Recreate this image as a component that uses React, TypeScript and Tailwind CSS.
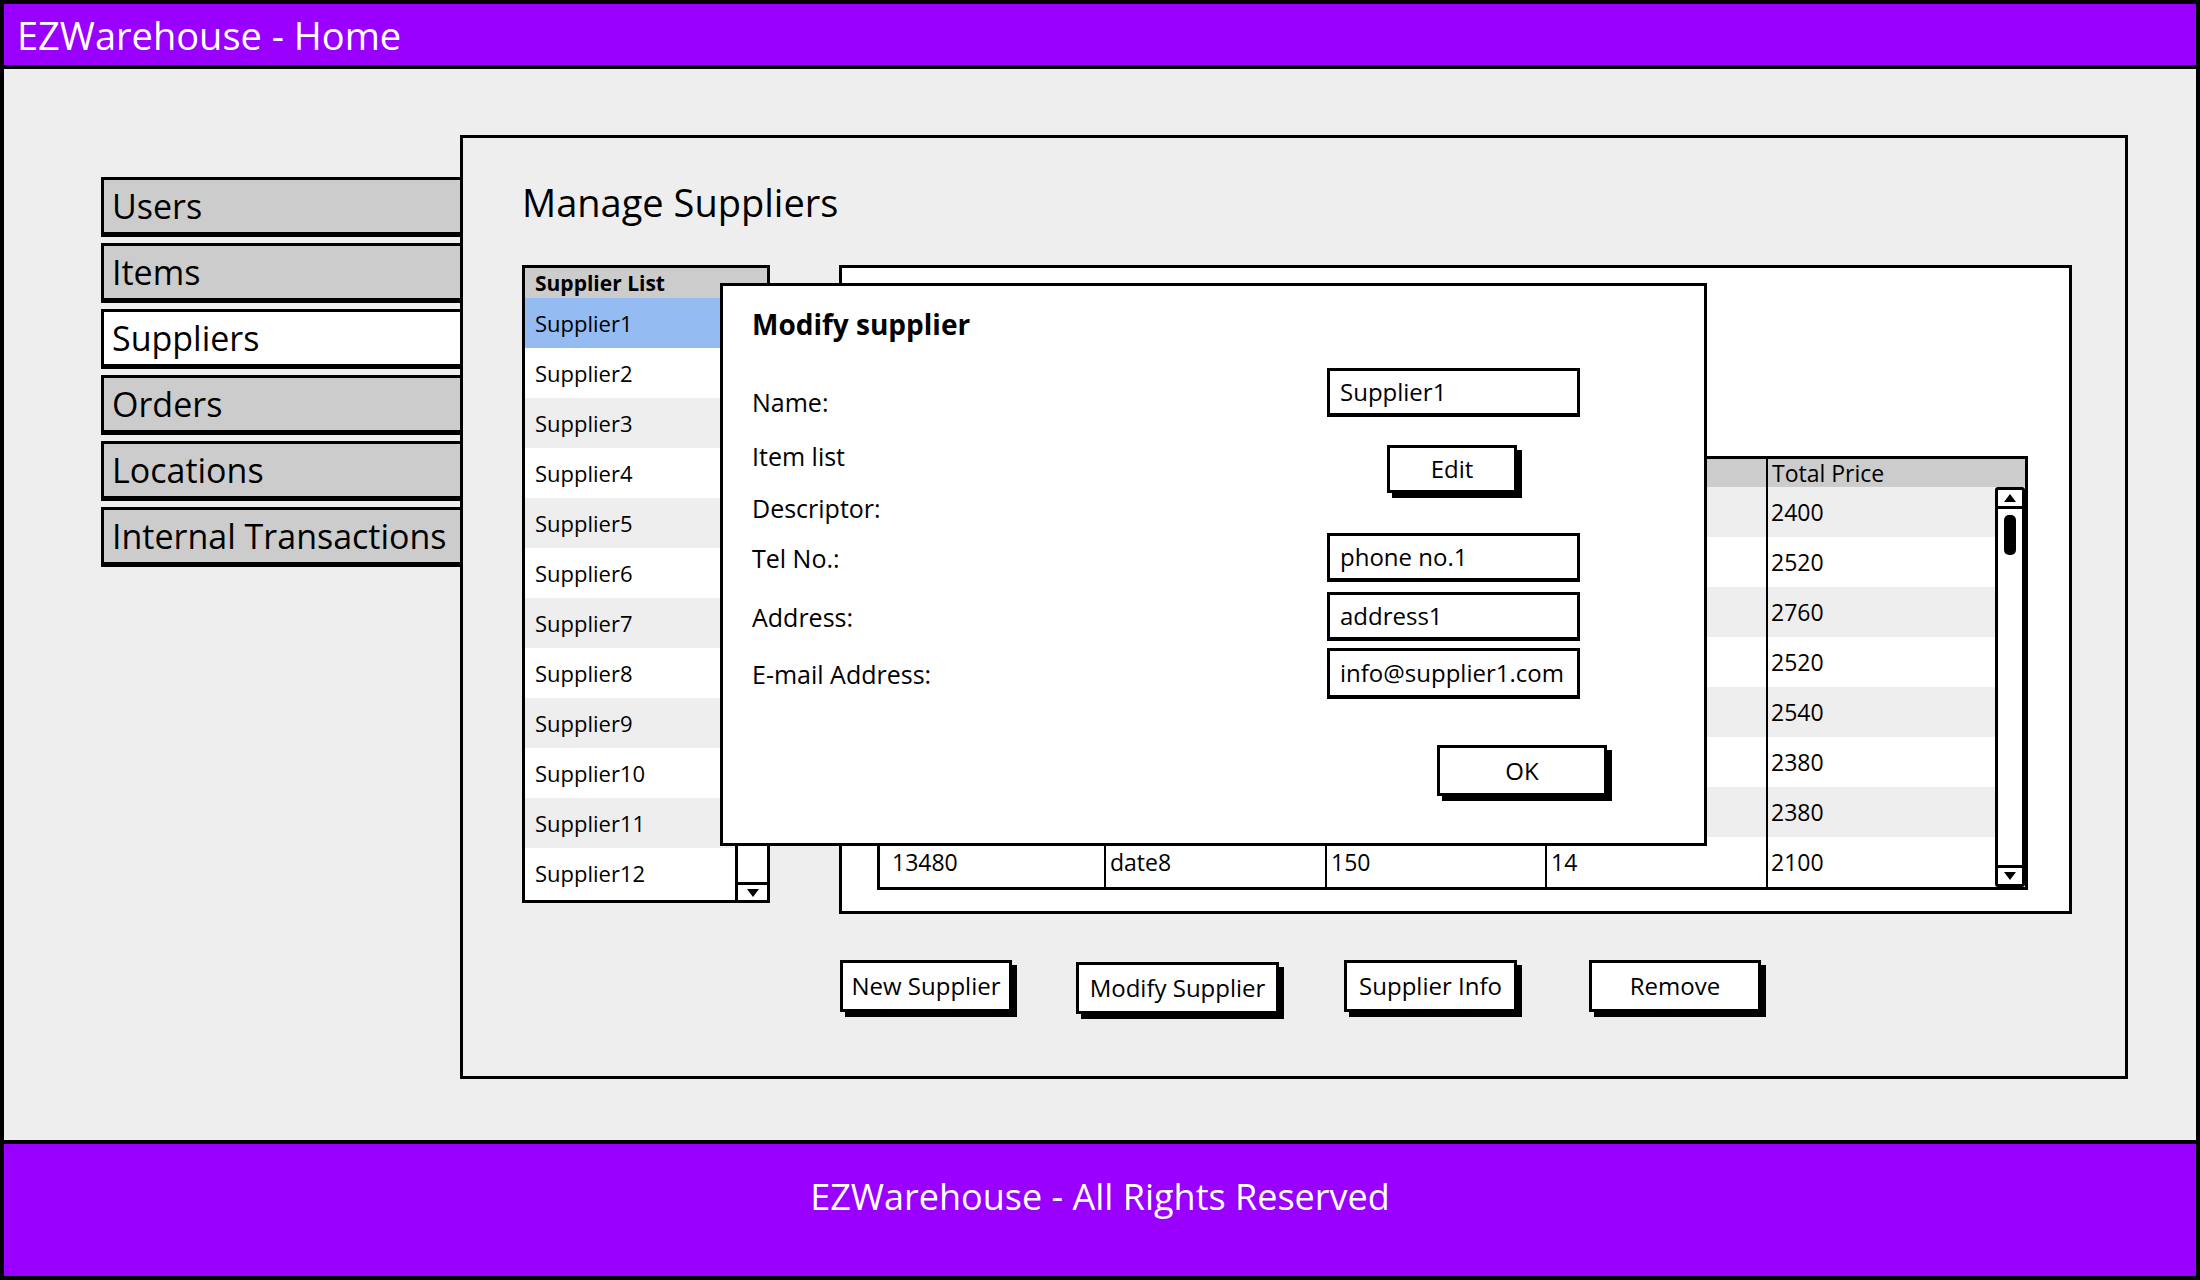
import type { ReactNode } from 'react';

const navItems = ['Users', 'Items', 'Suppliers', 'Orders', 'Locations', 'Internal Transactions'];
const suppliers = Array.from({ length: 12 }, (_, i) => `Supplier${i + 1}`);

// rows above the last one sit under the dialog, only the total column shows
const orders = [
  { id: '', date: '', qty: '', price: '', total: '2400' },
  { id: '', date: '', qty: '', price: '', total: '2520' },
  { id: '', date: '', qty: '', price: '', total: '2760' },
  { id: '', date: '', qty: '', price: '', total: '2520' },
  { id: '', date: '', qty: '', price: '', total: '2540' },
  { id: '', date: '', qty: '', price: '', total: '2380' },
  { id: '', date: '', qty: '', price: '', total: '2380' },
  { id: '13480', date: 'date8', qty: '150', price: '14', total: '2100' },
];

function UpArrow() {
  return (
    <svg width="14" height="10" viewBox="0 0 14 10">
      <polygon points="7,1 13,9 1,9" fill="#000" />
    </svg>
  );
}

function DownArrow() {
  return (
    <svg width="14" height="10" viewBox="0 0 14 10">
      <polygon points="1,1 13,1 7,9" fill="#000" />
    </svg>
  );
}

function SketchButton({ children, className = '' }: { children: ReactNode; className?: string }) {
  return (
    <div
      className={`flex items-center justify-center border-[3px] border-black bg-white text-[24px] leading-none shadow-[5px_5px_0_0_#000] ${className}`}
    >
      {children}
    </div>
  );
}

function Field({ value }: { value: string }) {
  return (
    <div className="flex h-full w-[253px] items-center border-[3px] border-b-4 border-black bg-white pl-[10px] text-[24px] leading-none">
      {value}
    </div>
  );
}

function SupplierList() {
  return (
    <div className="flex h-[638px] w-[248px] shrink-0 flex-col border-[3px] border-black bg-white">
      <div className="flex h-[30px] items-center bg-[#cccccc] pl-[10px] text-[21px] font-bold leading-none">
        Supplier List
      </div>
      <div className="flex flex-1">
        <div className="flex flex-1 flex-col">
          {suppliers.map((s, i) => (
            <div
              key={s}
              className={`flex h-[50px] items-center pl-[10px] text-[22px] leading-none ${
                i === 0 ? 'bg-[#94bbf2]' : i % 2 === 0 ? 'bg-[#eeeeee]' : 'bg-white'
              }`}
            >
              {s}
            </div>
          ))}
        </div>
        <div className="flex w-[32px] flex-col border-l-[3px] border-black bg-white">
          <div className="flex h-[18px] items-center justify-center border-b-[3px] border-black">
            <UpArrow />
          </div>
          <div className="flex-1" />
          <div className="flex h-[18px] items-center justify-center border-t-[3px] border-black">
            <DownArrow />
          </div>
        </div>
      </div>
    </div>
  );
}

function OrdersTable() {
  const cols = 'grid grid-cols-[226px_221px_220px_221px_1fr]';
  return (
    <div className="flex w-[1151px] flex-col border-[3px] border-black bg-white text-[23px] leading-none">
      <div className={`${cols} h-[28px] bg-[#cccccc]`}>
        <div className="border-r-2 border-black" />
        <div className="border-r-2 border-black" />
        <div className="border-r-2 border-black" />
        <div className="border-r-2 border-black" />
        <div className="flex items-center pl-[4px]">Total Price</div>
      </div>
      <div className="flex">
        <div className="flex-1">
          {orders.map((o, i) => (
            <div key={i} className={`${cols} h-[50px] ${i % 2 === 0 ? 'bg-[#eeeeee]' : 'bg-white'}`}>
              <div className="flex items-center border-r-2 border-black pl-[12px]">{o.id}</div>
              <div className="flex items-center border-r-2 border-black pl-[4px]">{o.date}</div>
              <div className="flex items-center border-r-2 border-black pl-[4px]">{o.qty}</div>
              <div className="flex items-center border-r-2 border-black pl-[4px]">{o.price}</div>
              <div className="flex items-center pl-[3px]">{o.total}</div>
            </div>
          ))}
        </div>
        <div className="flex w-[30px] flex-col rounded-[3px] border-[3px] border-black bg-white">
          <div className="flex h-[19px] items-center justify-center border-b-[3px] border-black">
            <UpArrow />
          </div>
          <div className="flex justify-center pt-[6px]">
            <div className="h-[40px] w-[12px] rounded-[5px] bg-black" />
          </div>
          <div className="flex-1" />
          <div className="flex h-[19px] items-center justify-center border-t-[3px] border-black">
            <DownArrow />
          </div>
        </div>
      </div>
    </div>
  );
}

function ModifySupplierDialog() {
  return (
    <div className="absolute left-[720px] top-[283px] flex h-[563px] w-[987px] flex-col border-[3px] border-black bg-white pl-[29px] pt-[23px]">
      <div className="text-[28px] font-bold leading-[30px]">Modify supplier</div>

      <div className="mt-[29px] flex h-[49px] items-end">
        <div className="w-[575px] shrink-0 text-[25px] leading-[30px]">Name:</div>
        <Field value="Supplier1" />
      </div>

      <div className="mt-[28px] flex h-[48px] items-start">
        <div className="-mt-[4px] w-[575px] shrink-0 text-[25px] leading-[30px]">Item list</div>
        <SketchButton className="ml-[60px] h-[48px] w-[130px]">Edit</SketchButton>
      </div>

      <div className="flex h-[30px] items-center">
        <div className="w-[575px] shrink-0 text-[25px] leading-[30px]">Descriptor:</div>
      </div>

      <div className="mt-[10px] flex h-[49px] items-center">
        <div className="w-[575px] shrink-0 text-[25px] leading-[30px]">Tel No.:</div>
        <Field value="phone no.1" />
      </div>

      <div className="mt-[10px] flex h-[49px] items-center">
        <div className="w-[575px] shrink-0 text-[25px] leading-[30px]">Address:</div>
        <Field value="address1" />
      </div>

      <div className="mt-[7px] flex h-[51px] items-center">
        <div className="w-[575px] shrink-0 text-[25px] leading-[30px]">E-mail Address:</div>
        <Field value="info@supplier1.com" />
      </div>

      <div className="mt-[46px] flex">
        <div className="w-[575px] shrink-0" />
        <SketchButton className="ml-[110px] h-[51px] w-[170px]">OK</SketchButton>
      </div>
    </div>
  );
}

export default function App() {
  return (
    <div className="relative flex h-[1280px] w-[2200px] flex-col overflow-hidden bg-[#eeeeee] font-['Open_Sans',sans-serif] text-black">
      {/* Header */}
      <header className="flex h-[69px] shrink-0 items-center border-4 border-black bg-[#9900ff] pl-[13px]">
        <span className="text-[38px] leading-none text-white">EZWarehouse - Home</span>
      </header>

      {/* Body */}
      <div className="flex flex-1 items-start border-x-4 border-black pl-[97px] pt-[66px]">
        <nav className="mt-[42px] flex w-[359px] shrink-0 flex-col gap-[6px]">
          {navItems.map((item) => (
            <div
              key={item}
              className={`flex h-[60px] items-center border-[3px] border-b-[5px] border-r-0 border-black pl-[8px] text-[34px] leading-none ${
                item === 'Suppliers' ? 'bg-white' : 'bg-[#cccccc]'
              }`}
            >
              {item}
            </div>
          ))}
        </nav>

        <main className="flex h-[944px] w-[1668px] shrink-0 flex-col border-[3px] border-black bg-[#eeeeee] pl-[59px] pt-[42px]">
          <h1 className="text-[38px] leading-[44px]">Manage Suppliers</h1>

          <div className="mt-[41px] flex items-start">
            <SupplierList />
            <div className="ml-[69px] flex h-[649px] w-[1233px] flex-col border-[3px] border-black bg-white pl-[35px] pt-[188px]">
              <OrdersTable />
            </div>
          </div>

          <div className="mt-[46px] flex pl-[318px]">
            <SketchButton className="h-[52px] w-[172px]">New Supplier</SketchButton>
            <SketchButton className="ml-[64px] mt-[2px] h-[52px] w-[203px]">Modify Supplier</SketchButton>
            <SketchButton className="ml-[65px] h-[52px] w-[173px]">Supplier Info</SketchButton>
            <SketchButton className="ml-[72px] h-[52px] w-[172px]">Remove</SketchButton>
          </div>
        </main>
      </div>

      {/* Footer */}
      <footer className="flex h-[140px] shrink-0 items-center justify-center border-4 border-black bg-[#9900ff] pb-[26px]">
        <span className="text-[36px] leading-none text-white">EZWarehouse - All Rights Reserved</span>
      </footer>

      <ModifySupplierDialog />
    </div>
  );
}
